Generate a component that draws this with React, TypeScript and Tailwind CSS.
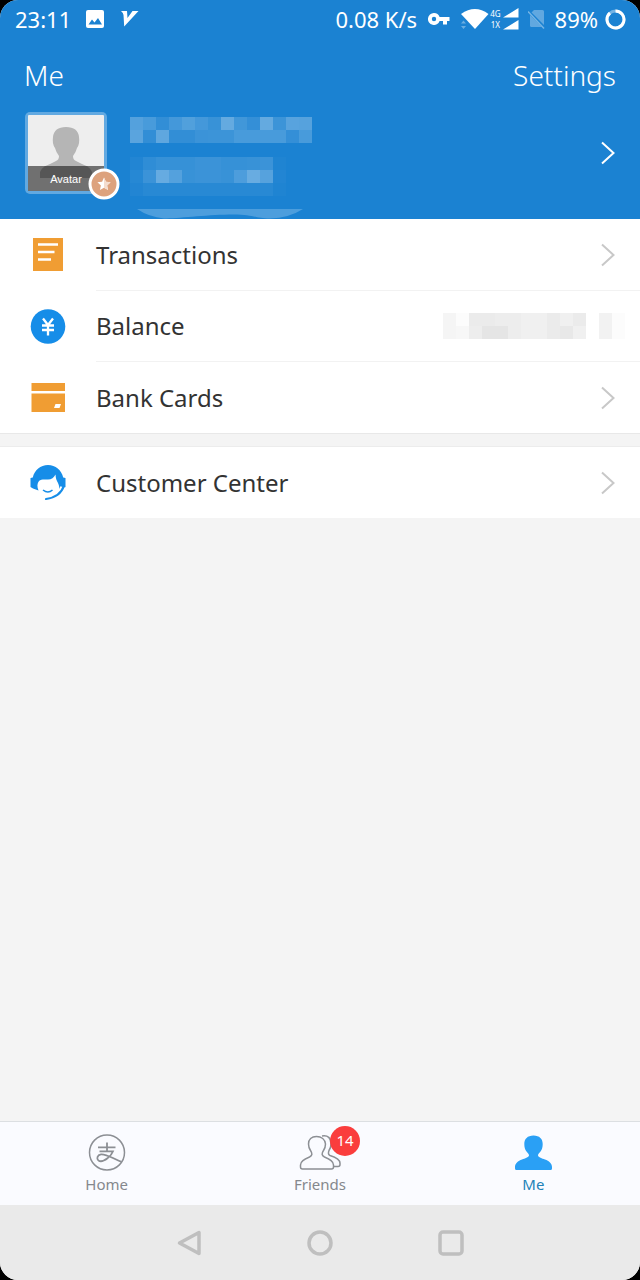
import type { ReactNode } from "react";

// Opacity (in percent) of every 13px block in the masked fields
const NAME_MASK = [
  [25, 20, 10, 18, 24, 18, 13, 32, 17, 11, 32, 15, 27, 26],
  [28, 10, 30, 10, 10, 14, 15, 15, 20, 20, 20, 20, 11, 20],
];
const ACCOUNT_MASK = [
  [3, 9, 12, 12, 12, 14, 14, 12, 12, 13, 14, 2],
  [5, 14, 33, 25, 13, 14, 14, 13, 22, 34, 26, 3],
  [3, 6, 6, 6, 6, 6, 6, 6, 6, 6, 6, 2],
];
const BALANCE_MASK = [
  [4, 1, 8, 8, 7, 7, 6, 6, 8, 6, 8, 0, 5, 1],
  [4, 3, 7, 10, 10, 7, 6, 6, 8, 9, 6, 0, 5, 1],
];

const Mosaic = ({ rows, fill }: { rows: number[][]; fill: string }) => (
  <svg
    width={rows[0].length * 13}
    height={rows.length * 13}
    fill={fill}
    shapeRendering="crispEdges"
    aria-hidden="true"
  >
    {rows.map((row, y) =>
      row.map((value, x) => (
        <rect key={`${x}-${y}`} x={x * 13} y={y * 13} width="13" height="13" opacity={value / 100} />
      ))
    )}
  </svg>
);

const Chevron = ({ className }: { className: string }) => (
  <svg width="16" height="24" viewBox="0 0 16 24" fill="none" strokeWidth="2" className={className} aria-hidden="true">
    <path d="M2 1.5 13.5 12 2 22.5" stroke="currentColor" />
  </svg>
);

const StatusBar = () => (
  <div className="flex h-[38px] items-center justify-between pr-[14px] pl-[15px] text-[22px] leading-[38px]">
    <div className="flex items-center">
      <span>23:11</span>
      <svg className="ml-[15px]" width="18" height="18" viewBox="0 0 18 18" aria-hidden="true">
        <rect width="18" height="18" rx="2" fill="#fff" />
        <path d="M2.5 14.5 6 9.5l2.5 3 3.5-4.500 4 6.500z" fill="#1b82d2" />
      </svg>
      <svg className="ml-[17px]" width="18" height="17" viewBox="0 0 18 17" fill="#fff" aria-hidden="true">
        <path d="M0 0h6l.5 7L11.500 0h6L3.200 15.500 2.500 4 1.800 2z" />
      </svg>
    </div>
    <div className="flex items-center">
      <span>0.08 K/s</span>
      <svg className="ml-[11px]" width="22" height="12" viewBox="0 0 22 12" fill="#fff" aria-hidden="true">
        <path
          fillRule="evenodd"
          d="M6 0a6 6 0 0 1 5.600 4H21.500v4H19v3.500h-4V8h-3.400A6 6 0 1 1 6 0zm0 3.800a2.200 2.200 0 1 0 0 4.400 2.200 2.200 0 0 0 0-4.400z"
        />
      </svg>
      <svg className="ml-[10px]" width="30" height="22" viewBox="0 0 30 22" fill="#fff" aria-hidden="true">
        <path d="M1 6Q15-4 28.500 6L15 21z" />
        <path d="m1 15.500 2.500-3 2.500 3zm0 2.500 2.500 3L6 18z" opacity=".35" />
      </svg>
      <div className="flex flex-col text-center text-[8px] leading-[11px]">
        <span>4G</span>
        <span>1X</span>
      </div>
      <svg className="ml-0.5" width="16" height="22" viewBox="0 0 16 22" fill="#fff" aria-hidden="true">
        <path d="M15.500 0v9.500H0zM15.500 12v9.500H0z" />
      </svg>
      <svg className="ml-[9px]" width="18" height="20" viewBox="0 0 18 20" aria-hidden="true">
        <path d="M6 1h8.500q1.500 0 1.500 1.500V18H3.500Q2 18 2 16.500V5z" fill="#61a8e0" />
        <path d="m0 2 17 17" stroke="#1b82d2" strokeWidth="3" />
        <path d="m0 2.500 16 17" stroke="#75b4e4" strokeWidth="1.500" />
      </svg>
      <span className="ml-[9px]">89%</span>
      <svg className="ml-[7px]" width="21" height="21" viewBox="0 0 21 21" fill="none" strokeWidth="3" aria-hidden="true">
        <circle cx="10.500" cy="10.500" r="8.500" stroke="#74b3e4" />
        <path d="M10.500 2a8.500 8.500 0 1 1-5.500 2" stroke="#fff" />
      </svg>
    </div>
  </div>
);

const Avatar = () => (
  <div className="relative size-[82px] shrink-0">
    <svg width="82" height="82" viewBox="0 0 82 82" aria-hidden="true">
      <rect width="82" height="82" rx="5" fill="#62a9e1" />
      <rect x="3" y="3" width="76" height="76" rx="1" fill="#eee" />
      <path
        d="M15 66v-6q1-5 10-8l6-3q3-1 3-5-3-4-4-8-3-4-2-11 1-10 13-10t13 10q1 7-2 11-1 4-4 8 0 4 3 5l6 3q9 3 10 8v6z"
        fill="#b5b5b5"
      />
      <path d="M3 54h76v25H3z" fill="#707070" />
      <path d="M15 66v-6q1-3 5-6h42q4 3 5 6v6z" fill="#565656" />
    </svg>
    <span className="absolute inset-x-0 bottom-2 text-center font-['Liberation_Sans',sans-serif] text-[11px] leading-[14px] text-white">
      Avatar
    </span>
    <svg className="absolute -right-[13px] -bottom-[6px]" width="32" height="32" viewBox="0 0 32 32" aria-hidden="true">
      <circle cx="16" cy="16" r="14" fill="#dda27d" stroke="#fff" strokeWidth="3" />
      <path d="m16 9.500 1.900 4.300 4.700.5-3.500 3.200 1 4.600-4.100-2.400-4.100 2.400 1-4.600-3.500-3.200 4.700-.5z" fill="#fff" />
      <path d="m16 9.500 1.900 4.300 4.700.5-3.500 3.200 1 4.600-4.100-2.400z" fill="#f4ddcf" />
    </svg>
  </div>
);

const Header = () => (
  <header className="bg-[#1b82d2] text-white">
    <StatusBar />
    <div className="flex h-[74px] items-center justify-between px-6 text-[28px] leading-[74px] font-light">
      <h1>Me</h1>
      <button type="button">Settings</button>
    </div>
    <button type="button" aria-label="Profile" className="flex h-[82px] w-full items-center pr-6 pl-[25px]">
      <Avatar />
      <span className="ml-[23px] flex flex-col gap-[14px] pt-[6px]">
        <Mosaic rows={NAME_MASK} fill="#fff" />
        <Mosaic rows={ACCOUNT_MASK} fill="#fff" />
      </span>
      <Chevron className="ml-auto" />
    </button>
    <div className="flex h-[25px] items-end pl-[137px]">
      <svg width="166" height="10" viewBox="0 0 166 10" aria-hidden="true">
        <path d="M0 0h166q-14 9-33 9.500C116 9 116 5 92 5.500S40 9.500 27 9.500Q12 8 0 0z" fill="#4d9edd" />
      </svg>
    </div>
  </header>
);

const TransactionsIcon = () => (
  <svg width="36" height="36" viewBox="0 0 36 36" aria-hidden="true">
    <path d="M3 0h30v33H3z" fill="#f09d33" />
    <path d="M8 6.500h20M8 14h16.500M8 21.500h13" stroke="#fff" strokeWidth="2.500" />
  </svg>
);

const BalanceIcon = () => (
  <svg width="36" height="36" viewBox="0 0 36 36" fill="none" aria-hidden="true">
    <circle cx="18" cy="17.500" r="17.300" fill="#168de8" />
    <path d="m13 9.500 5 6.500 5-6.500M12 16.500h12M12 21h12M18 16v10.500" stroke="#fff" strokeWidth="2.300" />
  </svg>
);

const BankCardsIcon = () => (
  <svg width="36" height="36" viewBox="0 0 36 36" aria-hidden="true">
    <path d="M1.500 3H35v8H1.500zM1.500 13.500H35V32H1.500z" fill="#f09d33" />
    <path d="M25.500 24H31l-1.500 4H24z" fill="#fff" />
  </svg>
);

const CustomerIcon = () => (
  <svg width="36" height="36" viewBox="0 0 36 36" fill="none" aria-hidden="true">
    <path
      d="M2.800 12.500C4.500 5 10.500 0 18 0s13.500 5 15.200 12.500l2.300.5v9l-2.500 1.500-4 2c.5-2.500.3-5-1-7.500-1.500-2.500-2.300-5-2.500-8.500-1.500 3-4 5-7.500 5-4 0-7-.5-9 1.500-2 2.500-2 5.500-.5 9.500L3 23.500.500 22v-9z"
      fill="#168de8"
    />
    <path d="M32.800 22q-3.500 10.500-16.800 12" stroke="#fff" strokeWidth="5" />
    <path d="M33.800 21q-3.500 11-17.800 13" stroke="#168de8" strokeWidth="2.200" strokeLinecap="round" />
    <path d="M13 25q5 4 9.500 0" stroke="#168de8" strokeWidth="1.500" />
  </svg>
);

type RowProps = { icon: ReactNode; label: string; divider?: boolean; children?: ReactNode };

const Row = ({ icon, label, divider, children }: RowProps) => (
  <li>
    <button type="button" className="flex w-full items-center pl-[30px] text-left">
      {icon}
      <span
        className={`ml-[30px] flex h-[71px] flex-1 items-center justify-between text-2xl leading-[70px] ${
          divider ? "border-b border-[#f2f2f2]" : ""
        }`}
      >
        {label}
        {children ?? <Chevron className="mr-6 text-[#c8c8c8]" />}
      </span>
    </button>
  </li>
);

const HomeIcon = () => (
  <svg width="44" height="38" viewBox="0 0 44 38" fill="none" stroke="#8c8f94" strokeWidth="1.500" aria-hidden="true">
    <circle cx="22" cy="18.500" r="17.500" />
    <path
      d="M13 13.300h17.500M22 8.500v8.800M14.500 17.300H28q-1.500 4-5.500 7c-4 3-7.500 3.500-9.200 2s-1.300-5.500 2.700-6c6-.5 12 4.500 20.500 7.500"
      strokeWidth="1.800"
    />
  </svg>
);

const FriendsIcon = () => (
  <svg
    width="44"
    height="38"
    viewBox="0 0 44 38"
    fill="none"
    stroke="#8c8f94"
    strokeWidth="1.500"
    strokeLinejoin="round"
    aria-hidden="true"
  >
    <path d="M18.500 2.500c-5 0-8 3-8 7.500 0 3 1 5 2 6.500 2 3 2 5-1 6.500-4 1.500-9 3.500-9 8v2q0 2 2 2h29q2 0 2-2v-2c0-4.500-5-6.500-9-8-3-1.500-3-3.500-1-6.500 1-1.500 2-3.500 2-6.500-.5-4.500-4-7.500-9-7.500z" />
    <path d="M24 2c6-1 9 2 9 8 0 3-1 5-2 6.500-1 2.500-1 4 1 5 3 1 10 3.500 10 7.500v1.500q0 2-2 2h-4" />
  </svg>
);

const MeIcon = () => (
  <svg width="44" height="38" viewBox="0 0 44 38" fill="#2aa0f5" aria-hidden="true">
    <path d="M22.500 1.500c-6 0-9.200 3.500-9.200 8.500 0 3 .7 5.500 2.200 7.500 1 1.500 2.700 2.500 2.500 4-.5 2-4 2.800-7 4-4 1.500-7 4-7 7.500v1.500Q4 36 5.500 36h34q1.500 0 1.500-1.500V33c0-3.500-3-6-7-7.500-3-1.200-6.500-2-7-4-.2-1.500 1.500-2.500 2.500-4 1.500-2 2.200-4.500 2.200-7.500 0-5-3.200-8.500-9.200-8.500z" />
  </svg>
);

const Tab = ({ label, icon, active, badge }: { label: string; icon: ReactNode; active?: boolean; badge?: number }) => (
  <a
    href="#"
    aria-current={active ? "page" : undefined}
    className={`flex flex-1 flex-col items-center pt-3 text-[15px] leading-6 ${
      active ? "text-[#2282b8]" : "text-[#85888d]"
    }`}
  >
    <span className="relative">
      {icon}
      {badge !== undefined && (
        <span className="absolute -top-2 -right-[18px] size-[30px] rounded-full bg-[#fa3d3d] text-center text-[15px] leading-[29px] text-white">
          {badge}
        </span>
      )}
    </span>
    {label}
  </a>
);

const SystemNav = () => (
  <div className="flex h-[75px] items-center justify-center gap-[105px] bg-[#eaeaea] text-[#bfbfbf]">
    <button type="button" aria-label="Back">
      <svg width="26" height="26" viewBox="0 0 26 26" fill="none" stroke="currentColor" strokeWidth="3.500" strokeLinejoin="round">
        <path d="M23 2.500v21L3.500 13z" />
      </svg>
    </button>
    <button type="button" aria-label="Home screen">
      <svg width="26" height="26" viewBox="0 0 26 26" fill="none" stroke="currentColor" strokeWidth="3.500">
        <circle cx="13" cy="13" r="11" />
      </svg>
    </button>
    <button type="button" aria-label="Recent apps">
      <svg width="26" height="26" viewBox="0 0 26 26" fill="none" stroke="currentColor" strokeWidth="3.500">
        <rect x="2" y="2" width="22" height="22" rx="3" />
      </svg>
    </button>
  </div>
);

const App = () => {
  return (
    <div className="min-h-screen bg-black font-['Noto_Sans',sans-serif] text-[#333]">
      <div className="flex min-h-screen flex-col overflow-hidden rounded-[18px] bg-[#f4f4f4]">
        <Header />
        <main className="flex-1">
          <ul className="border-b border-[#e8e8e8] bg-white pt-px">
            <Row icon={<TransactionsIcon />} label="Transactions" divider />
            <Row icon={<BalanceIcon />} label="Balance" divider>
              <span className="mr-[15px]">
                <Mosaic rows={BALANCE_MASK} fill="#000" />
              </span>
            </Row>
            <Row icon={<BankCardsIcon />} label="Bank Cards" />
          </ul>
          <ul className="mt-3 border-t border-[#ececec] bg-white">
            <Row icon={<CustomerIcon />} label="Customer Center" />
          </ul>
        </main>
        <nav className="flex h-[84px] border-t border-[#dcdfe2] bg-[#fafbff]">
          <Tab label="Home" icon={<HomeIcon />} />
          <Tab label="Friends" icon={<FriendsIcon />} badge={14} />
          <Tab label="Me" icon={<MeIcon />} active />
        </nav>
        <SystemNav />
      </div>
    </div>
  );
};

export default App;
